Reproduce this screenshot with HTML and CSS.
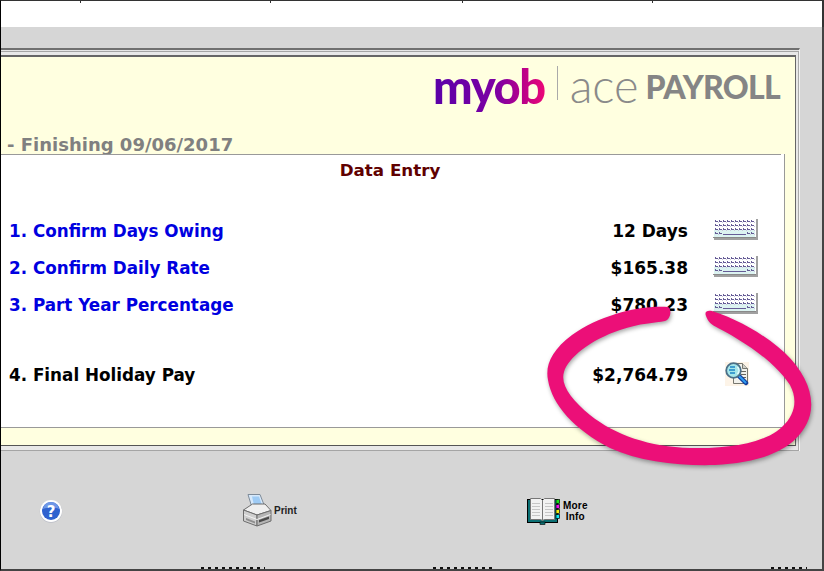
FILE: index.html
```html
<!DOCTYPE html>
<html lang="en">
<head>
<meta charset="utf-8">
<title>Data Entry</title>
<link rel="stylesheet" href="styles.css">
</head>
<body>
<svg class="defs" aria-hidden="true">
  <defs>
    <pattern id="keycap" x="2" y="2" width="4" height="4" patternUnits="userSpaceOnUse">
      <path d="M0.500 0v1.500M0 1.500h3" fill="none" stroke="#665c96" stroke-width="1"/>
      <path d="M3 2.500h1" stroke="#c9c6dc" stroke-width="1"/>
    </pattern>
  </defs>
  <symbol id="keyboard" viewBox="0 0 45 22">
    <path d="M43 1h2v21H1v-2h42z" fill="#a0a0a0"/>
    <rect x="0" y="0" width="43" height="20" fill="#fff"/>
    <rect x="1" y="12" width="41" height="7" fill="#dcf3f1"/>
    <rect x="2" y="2" width="40" height="12" fill="url(#keycap)"/>
    <rect x="2" y="14" width="7" height="3" fill="url(#keycap)"/>
    <rect x="34" y="14" width="8" height="3" fill="url(#keycap)"/>
    <path d="M10 16.500h23" stroke="#665c96"/>
    <path d="M0 19.500h43" stroke="#8a8a8a"/>
  </symbol>
</svg>
<div class="screen">
  <div class="topbar"><i class="tick t1"></i><i class="tick t2"></i><i class="tick t3"></i><i class="tick t4"></i></div>
  <div class="window">
    <div class="frame">
      <div class="frame-mid">
        <div class="frame-inner">
          <header class="head">
            <div class="logo">
              <span class="myob">myob</span>
              <span class="logo-rule"></span>
              <span class="ace">ace</span>
              <span class="payroll">PAYROLL</span>
            </div>
            <div class="finishing">- Finishing 09/06/2017</div>
          </header>
          <section class="panel">
            <h1 class="title">Data Entry</h1>
            <div class="rows">
              <div class="row">
                <a class="label link">1. Confirm Days Owing</a>
                <span class="value">12 Days</span>
                <svg class="kbd" viewBox="0 0 45 22"><use href="#keyboard"/></svg>
              </div>
              <div class="row">
                <a class="label link">2. Confirm Daily Rate</a>
                <span class="value">$165.38</span>
                <svg class="kbd" viewBox="0 0 45 22"><use href="#keyboard"/></svg>
              </div>
              <div class="row">
                <a class="label link">3. Part Year Percentage</a>
                <span class="value">$780.23</span>
                <svg class="kbd" viewBox="0 0 45 22"><use href="#keyboard"/></svg>
              </div>
              <div class="row row-final">
                <span class="label">4. Final Holiday Pay</span>
                <span class="value">$2,764.79</span>
                <span class="icon-cell">
                  <svg class="lens" viewBox="0 0 24 24">
                    <rect x="0" y="0" width="24" height="24" fill="#fdf4e8"/>
                    <path d="M8.500 1.500h9l5 5v15h-14z" fill="#f1f1ec" stroke="#77776f"/>
                    <path d="M17.500 1.500v5h5" fill="#cfcfc8" stroke="#77776f"/>
                    <path d="M15 9.500h6M16 12.500h5M17 15.500h4M18 18.500h3" stroke="#66665e"/>
                    <path d="M13.500 13.500l7.500 7.500" stroke="#123f9c" stroke-width="4.500" stroke-linecap="round"/>
                    <path d="M14.500 14.500l6 6" stroke="#2f9cf2" stroke-width="2" stroke-linecap="round"/>
                    <circle cx="8.500" cy="8.500" r="7.300" fill="#a6e6ea" stroke="#4b6f88" stroke-width="1.800"/>
                    <path d="M5 5h5M4 8h6M5 11h5" stroke="#1e86c6" stroke-width="1.400"/>
                    <path d="M12.500 5a5 5 0 0 1 0 7" fill="none" stroke="#e8fbff" stroke-width="1.400"/>
                  </svg>
                </span>
              </div>
            </div>
          </section>
        </div>
      </div>
    </div>
    <footer class="tools">
      <svg class="help" viewBox="0 0 24 24">
        <circle cx="12" cy="12.600" r="11.200" fill="#b9bcc6"/>
        <circle cx="12" cy="12" r="11" fill="#fff"/>
        <circle cx="12" cy="12" r="9" fill="#2f62cf"/>
        <path d="M4 10a8 7 0 0 1 16 0c-4-2-11-2-16 0z" fill="#6f97e6"/>
        <text x="12" y="17.500" class="help-q">?</text>
      </svg>
      <div class="tool tool-print">
        <svg class="printer" viewBox="0 0 30 33">
          <path d="M6 .5L18 .5 22.500 12H9.500z" fill="#d7e9fb" stroke="#7e8b99"/>
          <path d="M10 2.500L17 2.500 20 11H12z" fill="#9ecbf5"/>
          <path d="M1.500 16L10.500 10H23L29 16.500 15 21z" fill="#efefef" stroke="#6d6d6d"/>
          <path d="M1.500 16L15 21V32L1.500 27z" fill="#cfcfcf" stroke="#6d6d6d"/>
          <path d="M15 21L29 16.500V27L15 32z" fill="#b5b5b5" stroke="#6d6d6d"/>
          <path d="M2 20.500L15 25.500 28.500 20.500" fill="none" stroke="#f2f2f2"/>
          <path d="M17 26L27 22.500V25L17 28.500z" fill="#4a4a4a"/>
          <path d="M4 24L13 27.500V29.500L4 26z" fill="#8f8f8f"/>
        </svg>
        <span class="print-label">Print</span>
      </div>
      <div class="tool tool-book">
        <svg class="book" viewBox="0 0 33 28">
          <rect x="0.500" y="2.500" width="30" height="23" fill="#0b6f73" stroke="#000"/>
          <rect x="13" y="25" width="5" height="2.500" fill="#0b6f73" stroke="#000" stroke-width=".6"/>
          <path d="M3.500 1.500h10l2 2v20l-2-1h-10z" fill="#f2f2f2" stroke="#777"/>
          <path d="M27.500 1.500h-10l-2 2v20l2-1h10z" fill="#f2f2f2" stroke="#777"/>
          <path d="M5 6.500h8M5 9.500h8M5 12.500h8M5 15.500h8M5 18.500h8M18 6.500h8M18 9.500h8M18 12.500h8M18 15.500h8M18 18.500h8" stroke="#c6c6c6"/>
          <rect x="29" y="2.500" width="3.500" height="4" fill="#18e018" stroke="#000" stroke-width=".7"/>
          <rect x="29" y="7.500" width="3.500" height="4" fill="#ef10ef" stroke="#000" stroke-width=".7"/>
          <rect x="29" y="12.500" width="3.500" height="4" fill="#f3ef10" stroke="#000" stroke-width=".7"/>
          <rect x="29" y="17.500" width="3.500" height="4" fill="#10e8f0" stroke="#000" stroke-width=".7"/>
        </svg>
        <span class="book-label">More<br>Info</span>
      </div>
    </footer>
    <div class="cut"><i class="dots d1"></i><i class="dots d2"></i><i class="dots d3"></i></div>
  </div>
</div>
<svg class="ink" viewBox="0 0 824 571" aria-hidden="true">
  <path class="ink-path" d="M668 307C640 305 600 315 572 335C552 350 545 365 548 380C552 405 575 430 610 448C640 462 680 466 715 465C760 463 800 450 810 415C815 395 805 372 785 353C765 335 740 320 712 311C708 310 704 311 706 316C708 322 712 325 718 328C745 342 775 362 790 385C798 400 795 415 782 427C765 443 730 449 690 448C650 447 615 435 590 415C572 400 560 385 564 372C568 358 590 340 620 330C640 323 655 323 665 321C671 319 672 309 668 307Z"/>
</svg>
</body>
</html>
```
FILE: styles.css
```css
* { box-sizing: border-box; }
html, body { margin: 0; padding: 0; background: #fff; }
body { width: 824px; height: 571px; overflow: hidden; position: relative; font-family: "DejaVu Sans", Verdana, sans-serif; }

.screen { display: flex; flex-direction: column; height: 571px; }

.topbar { position: relative; height: 27px; background: #fff; border-top: 1px solid #333; border-left: 1px solid #000; border-right: 2px solid #333; flex: none; }
.tick { position: absolute; top: 0; width: 1px; height: 2px; background: #333; }
.t1 { left: 79px; }
.t2 { left: 269px; }
.t3 { left: 461px; }
.t4 { left: 651px; }

.window { position: relative; flex: 1; display: flex; flex-direction: column; background: #d6d6d6; border-left: 1px solid #000; border-right: 2px solid #444; border-bottom: 2px solid #444; padding-top: 21px; }

.frame { height: 403px; margin-right: 22px; background: #e6e6e6; border-top: 2px solid #707070; border-right: 1px solid #f4f4f4; border-bottom: 1px solid #fff; flex: none; }
.frame-mid { height: 400px; padding-top: 3px; padding-right: 2px; padding-bottom: 2px; background: #e8e8e8; border-top: 1px solid #a5a5a5; border-right: 1px solid #aaa; border-bottom: 1px solid #a5a5a5; margin-top: 1px; }
.frame-inner { height: 391px; display: flex; flex-direction: column; background: #ffffe0; border-top: 2px solid #666; border-right: 1px solid #666; border-bottom: 1px solid #555; }

.head { height: 97px; flex: none; display: flex; flex-direction: column; justify-content: space-between; }
.logo { display: flex; align-items: flex-start; justify-content: flex-end; padding-right: 15px; height: 60px; }
.myob { font-family: "Lato", sans-serif; font-weight: 900; font-size: 47px; line-height: 56px; margin-top: 1px; letter-spacing: -1.4px; background: linear-gradient(90deg, #5a00a8 0%, #7e00a3 58%, #b8008a 80%, #ec0677 100%); -webkit-background-clip: text; background-clip: text; color: transparent; }
.logo-rule { width: 1px; height: 34px; margin: 9px 12px 0 12px; background: #aaa; }
.ace { font-family: "Lato", sans-serif; font-weight: 300; font-size: 47px; line-height: 56px; margin-top: 0; color: #8a8a8a; }
.payroll { font-family: "Lato", sans-serif; font-weight: 900; font-size: 32px; line-height: 40px; margin: 10px 0 0 7px; color: #858585; letter-spacing: -.7px; }
.finishing { padding-left: 6px; font-weight: 700; font-size: 18px; line-height: 20px; color: #808080; white-space: nowrap; margin-bottom: -1px; }

.panel { height: 274px; flex: none; margin-right: 10px; background: #fff; border-right: 1px solid #999; border-bottom: 1px solid #999; display: flex; flex-direction: column; }
.title { margin: 0 3px 0 0; padding-right: 2px; height: 32px; border-top: 1px solid #999; text-align: center; font-size: 16.7px; line-height: 31px; font-weight: 700; color: #600000; }

.rows { padding-top: 26px; display: flex; flex-direction: column; }
.row { height: 37px; display: grid; grid-template-columns: 1fr auto 45px; align-items: center; padding-left: 8px; padding-right: 26px; column-gap: 25px; }
.row-final { margin-top: 33px; }
.label { font-weight: 700; font-size: 16.8px; color: #000; white-space: nowrap; }
.link { color: #0000e0; }
.value { font-weight: 700; font-size: 17px; color: #000; text-align: right; white-space: nowrap; }
.kbd { width: 45px; height: 22px; display: block; margin-bottom: 4px; }
.icon-cell { display: flex; justify-content: flex-end; padding-right: 9px; margin-bottom: 2px; }
.lens { width: 24px; height: 24px; display: block; }

.tools { position: relative; flex: 1; }
.help { position: absolute; left: 38px; top: 48px; width: 24px; height: 24px; }
.help-q { font-family: "DejaVu Sans", sans-serif; font-weight: 700; font-size: 15px; fill: #fff; text-anchor: middle; }
.tool { position: absolute; display: flex; align-items: center; }
.tool-print { left: 241px; top: 43px; gap: 2px; }
.printer { width: 30px; height: 33px; display: block; }
.print-label { font-family: "Liberation Sans", Arial, sans-serif; font-weight: 700; font-size: 10px; color: #222; }
.tool-book { left: 526px; top: 46px; gap: 3px; }
.book { width: 33px; height: 28px; display: block; }
.book-label { font-family: "Liberation Sans", Arial, sans-serif; font-weight: 700; font-size: 10px; letter-spacing: .2px; line-height: 11px; text-align: center; color: #000; }

.cut { position: relative; height: 0; }
.dots { position: absolute; bottom: 0; height: 2px; background: repeating-linear-gradient(90deg, #111 0 3px, transparent 3px 7px); }
.d1 { left: 200px; width: 64px; }
.d2 { left: 432px; width: 60px; }
.d3 { left: 770px; width: 36px; }

.ink { position: absolute; left: 0; top: 0; width: 824px; height: 571px; pointer-events: none; }
.ink-path { fill: #ec0f78; filter: drop-shadow(1px 2px 2px rgba(0,0,0,.35)); }
.defs { position: absolute; width: 0; height: 0; }
```
